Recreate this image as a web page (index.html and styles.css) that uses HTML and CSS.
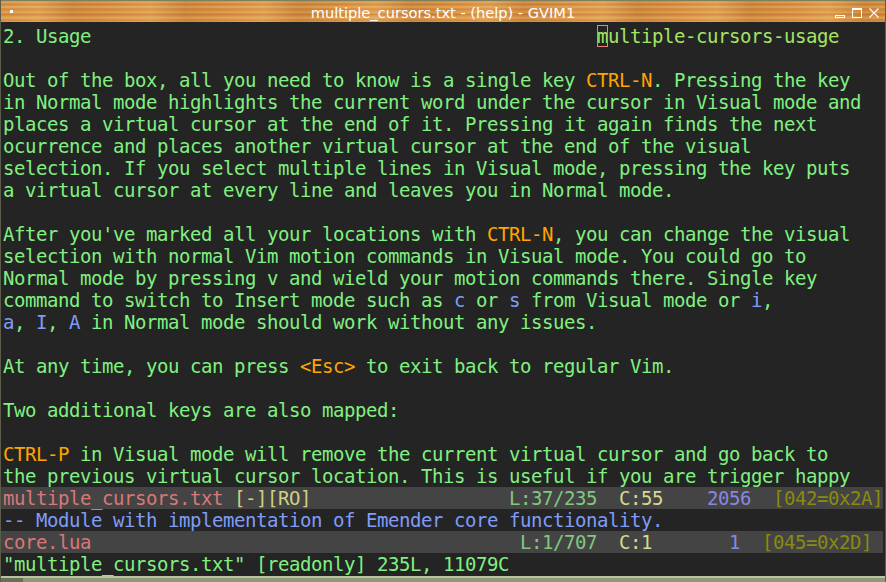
FILE: index.html
```html
<!DOCTYPE html>
<html>
<head>
<meta charset="utf-8">
<link rel="stylesheet" href="styles.css">
</head>
<body>
<div class="window">
  <div class="titlebar">
    <span class="menu-dot"></span>
    <span class="title">multiple_cursors.txt - (help) - GVIM1</span>
    <div class="controls">
      <svg width="12" height="12" viewBox="0 0 12 12"><rect x="1.5" y="8.5" width="9" height="2" fill="none" stroke="#fff" stroke-width="1"/></svg>
      <svg width="12" height="12" viewBox="0 0 12 12"><rect x="1.5" y="1.5" width="9" height="9" fill="none" stroke="#fff" stroke-width="1"/><line x1="1.5" y1="2.5" x2="10.5" y2="2.5" stroke="#fff"/></svg>
      <svg width="12" height="12" viewBox="0 0 12 12"><path d="M1.5 1.5 L10.5 10.5 M10.5 1.5 L1.5 10.5" stroke="#fff" stroke-width="1.1"/></svg>
    </div>
  </div>
  <div class="editor">
    <div class="row"><span class="g">2. Usage</span>                                              <span class="cur">m</span><span class="tag">ultiple-cursors-usage</span></div>
    <div class="row"> </div>
    <div class="row g">Out of the box, all you need to know is a single key <span class="o">CTRL-N</span>. Pressing the key</div>
    <div class="row g">in Normal mode highlights the current word under the cursor in Visual mode and</div>
    <div class="row g">places a virtual cursor at the end of it. Pressing it again finds the next</div>
    <div class="row g">ocurrence and places another virtual cursor at the end of the visual</div>
    <div class="row g">selection. If you select multiple lines in Visual mode, pressing the key puts</div>
    <div class="row g">a virtual cursor at every line and leaves you in Normal mode.</div>
    <div class="row"> </div>
    <div class="row g">After you've marked all your locations with <span class="o">CTRL-N</span>, you can change the visual</div>
    <div class="row g">selection with normal Vim motion commands in Visual mode. You could go to</div>
    <div class="row g">Normal mode by pressing v and wield your motion commands there. Single key</div>
    <div class="row g">command to switch to Insert mode such as <span class="b">c</span> or <span class="b">s</span> from Visual mode or <span class="b">i</span>,</div>
    <div class="row g"><span class="b">a</span>, <span class="b">I</span>, <span class="b">A</span> in Normal mode should work without any issues.</div>
    <div class="row"> </div>
    <div class="row g">At any time, you can press <span class="o">&lt;Esc&gt;</span> to exit back to regular Vim.</div>
    <div class="row"> </div>
    <div class="row g">Two additional keys are also mapped:</div>
    <div class="row"> </div>
    <div class="row g"><span class="o">CTRL-P</span> in Visual mode will remove the current virtual cursor and go back to</div>
    <div class="row g">the previous virtual cursor location. This is useful if you are trigger happy</div>
    <div class="row status"><span class="sf">multiple_cursors.txt</span> <span class="sm">[-][RO]</span>                  <span class="sl">L:37/235</span>  <span class="sc">C:55</span>    <span class="sp">2056</span>  <span class="sh">[042=0x2A]</span></div>
    <div class="row b">-- Module with implementation of Emender core functionality.</div>
    <div class="row status"><span class="sf">core.lua</span>                                       <span class="sl">L:1/707</span>  <span class="sc">C:1</span>       <span class="sp">1</span>  <span class="sh">[045=0x2D]</span></div>
    <div class="row g">"multiple_cursors.txt" [readonly] 235L, 11079C</div>
  </div>
  <div class="bottom"><span class="bottom-left"></span></div>
</div>
</body>
</html>
```
FILE: styles.css
```css
html, body {
  margin: 0;
  padding: 0;
  background: #242424;
  overflow: hidden;
}
.window {
  width: 886px;
  height: 582px;
  display: flex;
  flex-direction: column;
  background: #242424;
  box-sizing: border-box;
  border-left: 1px solid #5c5c48;
  border-right: 1px solid #5c5c48;
}
.titlebar {
  height: 22px;
  flex: none;
  position: relative;
  display: flex;
  align-items: center;
  justify-content: center;
  border-top: 1px solid #7c8060;
  box-sizing: border-box;
  background:
    repeating-linear-gradient(90deg, rgba(255,230,170,0.0) 0px, rgba(255,220,150,0.18) 37px, rgba(120,60,10,0.12) 71px, rgba(255,230,170,0.0) 113px),
    repeating-linear-gradient(180deg, #d8903e 0px, #e3a056 2px, #c97e32 3px, #dc9848 5px, #e8aa60 6px, #cf8636 8px, #d99446 10px, #e4a458 12px, #c67a30 13px, #da9444 15px, #e6a85e 17px, #d08838 19px, #dc9a4c 21px);
}
.menu-dot {
  position: absolute;
  left: 9px;
  top: 9px;
  width: 3px;
  height: 3px;
  background: #fff;
}
.title {
  font-family: "DejaVu Sans", sans-serif;
  font-size: 14.6px;
  color: #fff;
  margin-top: 1px;
}
.controls {
  position: absolute;
  right: 5px;
  top: 6px;
  display: flex;
  gap: 5px;
}
.editor {
  flex: 1;
  padding-top: 3px;
  display: flex;
  flex-direction: column;
  font-family: "DejaVu Sans Mono", monospace;
  font-size: 19px;
  letter-spacing: -0.44px;
}
.row {
  height: 22px;
  line-height: 22px;
  white-space: pre;
  padding-left: 2px;
  color: #80f080;
}
.g { color: #80f080; }
.o { color: #ffa500; }
.b { color: #7f9cf8; }
.tag { color: #a4e464; }
.cur {
  color: #a4e464;
  outline: 1px solid #f08080;
  outline-offset: -1px;
}
.status {
  background: #444444;
  margin-right: 2px;
}
.sf { color: #d87878; }
.sm { color: #d0d080; }
.sl { color: #80c880; }
.sc { color: #d8d890; }
.sp { color: #8888e0; }
.sh { color: #8a8a10; }
.bottom {
  height: 4px;
  flex: none;
  border-top: 2px solid #b8c4a0;
  background: #909878;
  display: flex;
}
.bottom-left {
  width: 22px;
  background: #6a7058;
}
```
